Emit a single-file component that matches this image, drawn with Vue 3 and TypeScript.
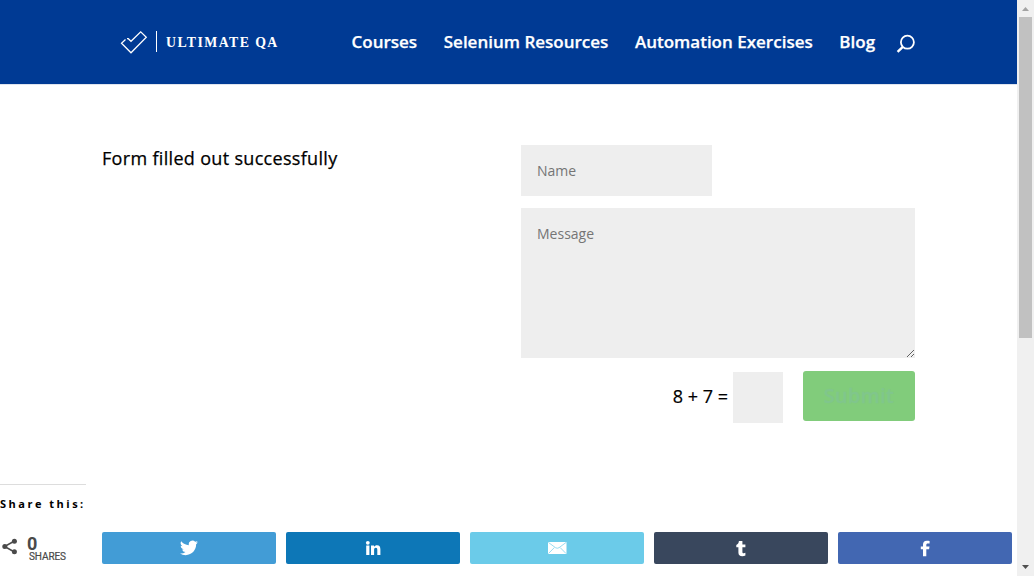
<script setup lang="ts">
import { ref } from 'vue'

interface ShareLink {
  id: string
  label: string
}

const links: string[] = ['Courses', 'Selenium Resources', 'Automation Exercises', 'Blog']
const shares: ShareLink[] = [
  { id: 'twitter', label: 'Tweet' },
  { id: 'linkedin', label: 'Share on LinkedIn' },
  { id: 'email', label: 'Email' },
  { id: 'tumblr', label: 'Share on Tumblr' },
  { id: 'facebook', label: 'Share on Facebook' },
]
const name = ref('')
const message = ref('')
const answer = ref('')
</script>

<template>
  <div class="window">
    <div class="page">
      <header class="header">
        <svg class="logo" width="164" height="28" viewBox="0 0 164 28">
          <path d="M5.5 9.5 L1.5 13.2 L11 22.8 L26.3 7.2 L20.7 1.8 L11 11.3 L8.3 8.7 L7 8.7" fill="none" stroke="#fff" stroke-width="1.25" />
          <path d="M36.5 1V22" stroke="#fff" stroke-width="1" />
          <text transform="translate(46 17) scale(.92 1)" x="0" y="0" textLength="121" lengthAdjust="spacing" class="logo-text">ULTIMATE QA</text>
        </svg>
        <nav class="nav">
          <a v-for="link in links" :key="link" class="nav-link">{{ link }}</a>
        </nav>
        <svg class="search" width="20" height="20" viewBox="0 0 20 20">
          <circle cx="11.4" cy="8.2" r="6.5" fill="none" stroke="#fff" stroke-width="1.8" />
          <path d="M6.8 12.8 L1.6 17.8" stroke="#fff" stroke-width="2.4" />
        </svg>
      </header>

      <main class="main">
        <p class="notice">Form filled out successfully</p>
        <form class="form" @submit.prevent>
          <input v-model="name" class="field name" type="text" placeholder="Name" />
          <textarea v-model="message" class="field message" placeholder="Message"></textarea>
          <div class="form-bottom">
            <label class="question">8 + 7 =</label>
            <input v-model="answer" class="field answer" type="text" />
            <button class="submit" type="submit">Submit</button>
          </div>
        </form>
      </main>

      <section class="share">
        <h3 class="share-title">Share this:</h3>
        <div class="share-row">
          <div class="total">
            <svg class="share-icon" width="17" height="18" viewBox="0 0 17 18">
              <path d="M14.5 3 L4.5 8.5 L14.5 14" fill="none" stroke="#4a4a4a" stroke-width="1.5" />
              <circle cx="14.4" cy="3.2" r="2.5" />
              <circle cx="4.8" cy="8.5" r="2.5" />
              <circle cx="14.4" cy="13.8" r="2.5" />
            </svg>
            <div class="count">
              <span class="number">0</span>
              <span class="caption">SHARES</span>
            </div>
          </div>
          <a v-for="s in shares" :key="s.id" class="share-button" :class="s.id" :aria-label="s.label">
            <svg v-if="s.id === 'twitter'" width="18" height="16" viewBox="0 0 24 20">
              <path fill="#fff" d="M24 2.4a9.8 9.8 0 0 1-2.8.8 5 5 0 0 0 2.1-2.7 9.9 9.9 0 0 1-3.1 1.2 4.92 4.92 0 0 0-8.4 4.5A14 14 0 0 1 1.7.9a4.92 4.92 0 0 0 1.5 6.6 4.9 4.9 0 0 1-2.2-.6 4.93 4.93 0 0 0 3.9 4.9 4.9 4.9 0 0 1-2.2.1 4.93 4.93 0 0 0 4.6 3.4A9.9 9.9 0 0 1 0 17.3a13.9 13.9 0 0 0 7.5 2.2c9.1 0 14.3-7.7 14-14.6A10 10 0 0 0 24 2.4z" />
            </svg>
            <svg v-else-if="s.id === 'linkedin'" width="16" height="16" viewBox="0 0 16 16">
              <circle cx="2.8" cy="2.8" r="1.9" fill="#fff" />
              <path fill="#fff" d="M1.2 5.5h3.2V15H1.2zM6 5.5h3v1.3c.7-1.1 1.7-1.6 3-1.6 2.5 0 3.4 1.5 3.4 4.2V15h-3.1v-5c0-1.4-.3-2.2-1.5-2.2S9.1 8.7 9.1 10v5H6z" />
            </svg>
            <svg v-else-if="s.id === 'email'" width="20" height="14" viewBox="0 0 20 14">
              <rect x="1" y="1" width="18.5" height="12" rx=".6" fill="#fff" />
              <path d="M1.5 1.5 L8.5 6.7 Q10.2 7.8 12 6.7 L19 1.5 M1.5 12.5 L7.3 6.6 M19 12.5 L13.2 6.6" fill="none" stroke="#6bcbe9" stroke-width=".7" />
            </svg>
            <svg v-else-if="s.id === 'tumblr'" width="12" height="17" viewBox="0 0 12 17">
              <path fill="#fff" d="M3.9 1h3.5v3.4h3v2.9h-3v4.4c0 1.1.3 1.5 1.3 1.5.7 0 1.2-.2 1.7-.4v2.8c-.9.5-1.9.7-3.1.7-2.5 0-3.9-1.2-3.9-3.7V7.3H1.3V4.9C3 4.3 3.7 3.1 3.9 1z" />
            </svg>
            <svg v-else width="12" height="17" viewBox="0 0 12 17">
              <path fill="#fff" d="M4 16.2V9.3H1.8V6.5H4V4.6C4 2.1 5.3.8 7.7.8c1.2 0 2.2.1 2.9.2v2.6H8.9c-1.3 0-1.6.6-1.6 1.6v1.3h3.2l-.4 2.8H7.3v6.9z" />
            </svg>
          </a>
        </div>
      </section>
    </div>

    <div class="scrollbar">
      <svg width="17" height="17" viewBox="0 0 17 17"><path d="M5 11H12L8.5 7z" fill="#a3a3a3" /></svg>
      <div class="thumb"></div>
      <svg class="down" width="17" height="17" viewBox="0 0 17 17"><path d="M5 6H12L8.5 10z" fill="#505050" /></svg>
    </div>
  </div>
</template>

<style>
body {
  margin: 0;
  overflow: hidden;
}
</style>

<style scoped>
* {
  box-sizing: border-box;
}
.window {
  display: flex;
  width: 1034px;
  height: 576px;
  background: #fff;
  color: #000;
  font-family: "Open Sans", sans-serif;
}
.page {
  width: 1017px;
  display: flex;
  flex-direction: column;
}
.header {
  height: 85px;
  flex: none;
  display: flex;
  align-items: flex-start;
  background: #003a94;
  border-bottom: 1px solid #dfe4ee;
}
.logo {
  margin: 30px 0 0 120px;
  flex: none;
}
.logo-text {
  font: bold 15px "Liberation Serif", serif;
  fill: #fff;
}
.nav {
  display: flex;
  gap: 26.6px;
  margin: 30px 0 0 67.5px;
}
.nav-link {
  font-size: 17px;
  line-height: 24px;
  font-weight: 600;
  color: #fff;
  white-space: nowrap;
  -webkit-text-stroke: 0.25px #fff;
}
.search {
  margin: 34px 0 0 21px;
}
.main {
  display: flex;
  justify-content: space-between;
  padding: 60px 102px 0;
  height: 399px;
  flex: none;
}
.notice {
  margin: 0;
  font-size: 18px;
  line-height: 26px;
  font-weight: 500;
  letter-spacing: 0.32px;
  -webkit-text-stroke: 0.25px #000;
}
.form {
  width: 394px;
  display: flex;
  flex-direction: column;
}
.field {
  border: 0;
  border-radius: 0;
  background: #eee;
  padding: 16px;
  font: 14px "Open Sans", sans-serif;
  color: #4e4e4e;
  outline: none;
}
.field::placeholder {
  color: #757575;
}
.name {
  width: 191px;
  height: 51px;
}
.message {
  width: 394px;
  height: 150px;
  margin-top: 12px;
  display: block;
  resize: both;
}
.form-bottom {
  display: flex;
  justify-content: flex-end;
  align-items: flex-start;
  margin-top: 13px;
}
.question {
  font-size: 18px;
  line-height: 26px;
  font-weight: 500;
  margin: 12px 5px 0 0;
  -webkit-text-stroke: 0.2px #000;
}
.answer {
  width: 50px;
  height: 51px;
  margin: 1px 20px 0 0;
}
.submit {
  width: 112px;
  height: 50px;
  border: 0;
  border-radius: 3px;
  background: #81cc7b;
  color: #80c68c;
  font: 600 20px "Open Sans", sans-serif;
  letter-spacing: 0.3px;
  padding: 0 0 2px;
  -webkit-text-stroke: 0.3px #80c68c;
}
.share-title {
  width: 86px;
  margin: 0;
  padding-top: 9px;
  border-top: 1px solid #ddd;
  font-size: 11px;
  line-height: 20px;
  font-weight: 700;
  letter-spacing: 2.5px;
  white-space: nowrap;
}
.share-row {
  display: flex;
  gap: 10px;
  margin-top: 18px;
}
.total {
  width: 92px;
  display: flex;
}
.share-icon {
  margin-top: 6px;
  fill: #4a4a4a;
}
.count {
  display: flex;
  flex-direction: column;
  margin-left: 10px;
  font-family: Roboto, sans-serif;
  color: #4a4a4a;
}
.number {
  font-size: 18px;
  line-height: 17px;
  font-weight: 700;
  margin-top: 3px;
}
.caption {
  font-size: 10px;
  line-height: 10px;
  margin: 0 0 0 2px;
  letter-spacing: -0.1px;
  -webkit-text-stroke: 0.2px #4a4a4a;
}
.share-button {
  width: 174px;
  height: 32px;
  border-radius: 2px;
  display: flex;
  align-items: center;
  justify-content: center;
}
.twitter { background: #429cd6; }
.linkedin { background: #0d77b7; }
.email { background: #6bcbe9; }
.tumblr { background: #39475d; }
.facebook { background: #4267b2; }
.scrollbar {
  width: 17px;
  height: 576px;
  background: #f0f0f0;
  display: flex;
  flex-direction: column;
  align-items: center;
}
.thumb {
  width: 13px;
  height: 321px;
  background: #c1c1c1;
}
.scrollbar svg {
  flex: none;
}
.down {
  margin-top: auto;
}
</style>
